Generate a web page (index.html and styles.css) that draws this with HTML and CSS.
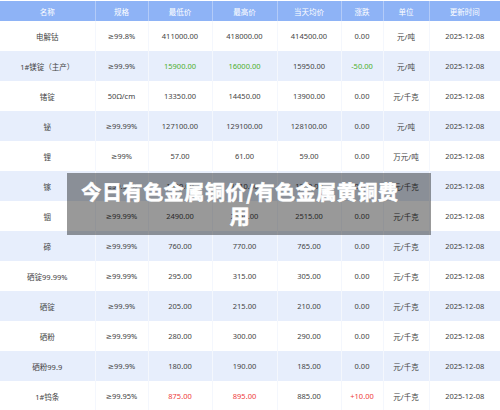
FILE: index.html
```html
<!DOCTYPE html>
<html lang="zh-CN">
<head>
<meta charset="utf-8">
<title>今日有色金属铜价</title>
<link rel="stylesheet" href="styles.css">
</head>
<body>
<div class="page">
  <table class="price-table">
    <colgroup>
      <col class="c1"><col class="c2"><col class="c3"><col class="c4"><col class="c5"><col class="c6"><col class="c7"><col class="c8">
    </colgroup>
    <thead>
      <tr><th>名称</th><th>规格</th><th>最低价</th><th>最高价</th><th>当天均价</th><th>涨跌</th><th>单位</th><th>更新时间</th></tr>
    </thead>
    <tbody>
      <tr><td>电解钴</td><td>≥99.8%</td><td>411000.00</td><td>418000.00</td><td>414500.00</td><td>0.00</td><td>元/吨</td><td>2025-12-08</td></tr>
      <tr><td>1#镁锭（主产）</td><td>≥99.9%</td><td class="down">15900.00</td><td class="down">16000.00</td><td>15950.00</td><td class="down">-50.00</td><td>元/吨</td><td>2025-12-08</td></tr>
      <tr><td>锗锭</td><td>50Ω/cm</td><td>13350.00</td><td>14450.00</td><td>13900.00</td><td>0.00</td><td>元/千克</td><td>2025-12-08</td></tr>
      <tr><td>铋</td><td>≥99.99%</td><td>127100.00</td><td>129100.00</td><td>128100.00</td><td>0.00</td><td>元/吨</td><td>2025-12-08</td></tr>
      <tr><td>锂</td><td>≥99%</td><td>57.00</td><td>61.00</td><td>59.00</td><td>0.00</td><td>万元/吨</td><td>2025-12-08</td></tr>
      <tr><td>镓</td><td>≥99.99%</td><td>1690.00</td><td>1710.00</td><td>1700.00</td><td>0.00</td><td>元/千克</td><td>2025-12-08</td></tr>
      <tr><td>铟</td><td>≥99.99%</td><td>2490.00</td><td>2540.00</td><td>2515.00</td><td>0.00</td><td>元/千克</td><td>2025-12-08</td></tr>
      <tr><td>碲</td><td>≥99.99%</td><td>760.00</td><td>770.00</td><td>765.00</td><td>0.00</td><td>元/千克</td><td>2025-12-08</td></tr>
      <tr><td>硒锭99.99%</td><td>≥99.99%</td><td>295.00</td><td>315.00</td><td>305.00</td><td>0.00</td><td>元/千克</td><td>2025-12-08</td></tr>
      <tr><td>硒锭</td><td>≥99.9%</td><td>205.00</td><td>215.00</td><td>210.00</td><td>0.00</td><td>元/千克</td><td>2025-12-08</td></tr>
      <tr><td>硒粉</td><td>≥99.99%</td><td>280.00</td><td>300.00</td><td>290.00</td><td>0.00</td><td>元/千克</td><td>2025-12-08</td></tr>
      <tr><td>硒粉99.9</td><td>≥99.9%</td><td>180.00</td><td>190.00</td><td>185.00</td><td>0.00</td><td>元/千克</td><td>2025-12-08</td></tr>
      <tr><td>1#钨条</td><td>≥99.95%</td><td class="up">875.00</td><td class="up">895.00</td><td>885.00</td><td class="up">+10.00</td><td>元/千克</td><td>2025-12-08</td></tr>
    </tbody>
  </table>
  <div class="title-banner">
    <h1 class="title-text">今日有色金属铜价/有色金属黄铜费用</h1>
  </div>
</div>
</body>
</html>
```
FILE: styles.css
```css
html, body {
  margin: 0;
  padding: 0;
  background: #ffffff;
}
.page {
  position: relative;
  width: 500px;
  height: 410px;
  overflow: hidden;
  padding-top: 1px;
  box-sizing: border-box;
  font-family: "Noto Sans", "DejaVu Sans", "Noto Sans CJK SC", sans-serif;
}
.price-table {
  width: 500px;
  table-layout: fixed;
  border-collapse: collapse;
  font-size: 7.5px;
  color: #444444;
}
.c1 { width: 95px; }
.c2 { width: 53px; }
.c3 { width: 64px; }
.c4 { width: 65px; }
.c5 { width: 64px; }
.c6 { width: 42px; }
.c7 { width: 46px; }
.c8 { width: 71px; }
.price-table th {
  height: 20px;
  padding: 0;
  background: #8eb3f6;
  color: #ffffff;
  font-weight: normal;
  text-align: center;
  border-right: 1px solid #b3cbf8;
}
.price-table td {
  height: 30px;
  padding: 0;
  text-align: center;
  white-space: nowrap;
  border-right: 1px solid #f4f7fd;
}
.price-table th:last-child,
.price-table td:last-child {
  border-right: none;
}
.price-table tbody tr:nth-child(even) td {
  background: #e7eefc;
}
.price-table td.down {
  color: #4caf2c;
}
.price-table td.up {
  color: #ee3b3b;
}
.title-banner {
  position: absolute;
  left: 67px;
  top: 173px;
  width: 364px;
  height: 62px;
  box-sizing: border-box;
  padding: 7px 26px 7px 8px;
  background: rgba(0, 0, 0, 0.4);
}
.title-text {
  margin: 0;
  font-family: "Noto Sans CJK SC", sans-serif;
  font-size: 20px;
  font-weight: 700;
  line-height: 24px;
  letter-spacing: 0.6px;
  color: #ffffff;
  -webkit-text-stroke: 0.6px #ffffff;
  text-align: center;
}
```
